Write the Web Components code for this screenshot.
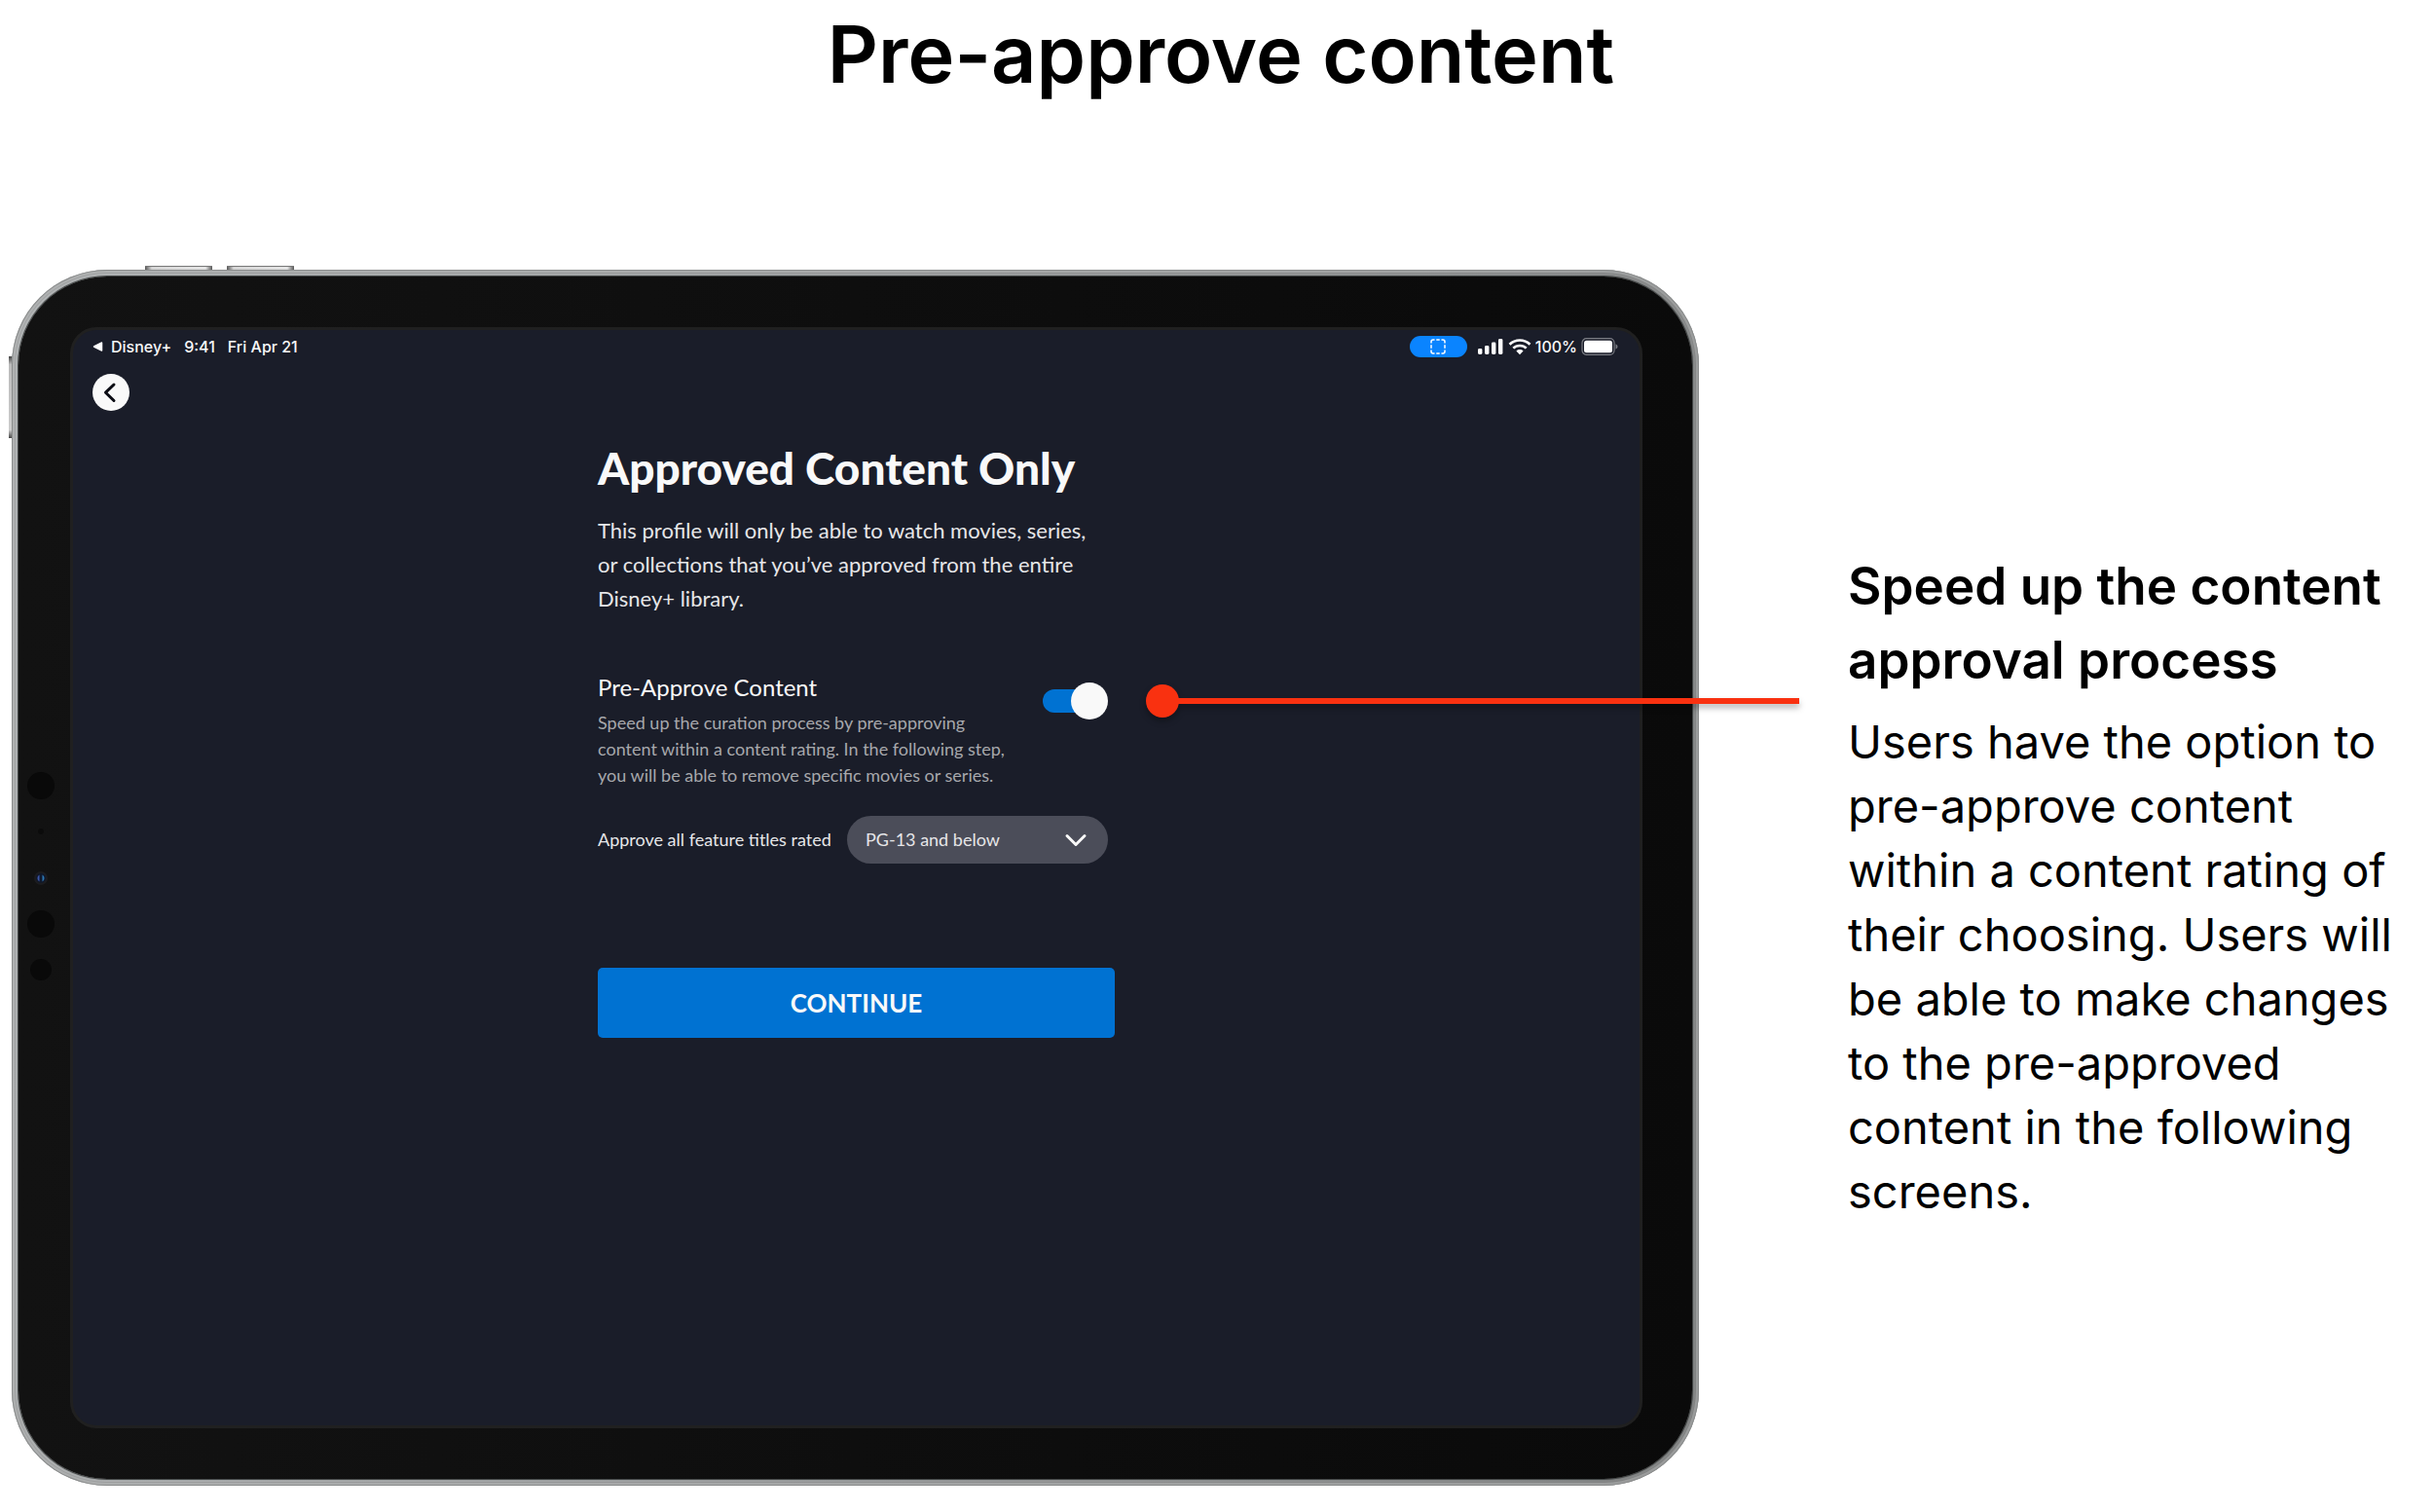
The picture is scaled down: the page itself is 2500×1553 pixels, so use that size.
<!DOCTYPE html>
<html lang="en">
<head>
  <meta charset="utf-8">
  <meta name="viewport" content="width=device-width, initial-scale=1">
  <title>Pre-approve content</title>
  <style>
    *, *::after, *::before {
      box-sizing: border-box;
    }

    body {
      color: #000;
      font-family: Inter, sans-serif;
      margin: 0;
      background: #fff;
    }
  </style>
</head>
<body>
  <feature-slide>
    <span slot="title">Pre-approve content</span>
    <tablet-frame slot="device">
      <status-bar app="Disney+" time="9:41" date="Fri Apr 21" battery="100%"></status-bar>
      <back-button></back-button>
      <approval-form>
        <callout-line slot="callout"></callout-line>
      </approval-form>
    </tablet-frame>
    <side-note slot="note">
      <span slot="heading">Speed up the content approval process</span>
      Users have the option to pre-approve content within a content rating of their choosing. Users will be able to make changes to the pre-approved content in the following screens.
    </side-note>
  </feature-slide>

  <script>
    class FeatureSlide extends HTMLElement {
      constructor() {
        super();

        this.attachShadow({ mode: 'open' });
        this.shadowRoot.innerHTML = `
          <style>
            :host {
              padding: 0 12px;
              display: block;
            }

            h1 {
              font-size: 81px;
              font-weight: 600;
              line-height: 96px;
              text-align: center;
              padding: 8px 0 173px 8px;
              margin: 0;
            }

            main {
              display: grid;
              grid-template-columns: 1733fr 590fr;
              column-gap: 153px;
              align-items: center;
            }
          </style>

          <h1><slot name="title"></slot></h1>
          <main>
            <slot name="device"></slot>
            <slot name="note"></slot>
          </main>
        `;
      }
    }

    class TabletFrame extends HTMLElement {
      constructor() {
        super();

        this.attachShadow({ mode: 'open' });
        this.shadowRoot.innerHTML = `
          <style>
            *, *::after, *::before {
              box-sizing: border-box;
            }

            :host {
              aspect-ratio: 1733 / 1249;
              display: block;
              position: relative;
            }

            .shell {
              height: 100%;
              padding: 7px;
              border-radius: 98px;
              background: linear-gradient(100deg, #b9bcbd, #a2a4a5 50%, #858787);
              box-shadow: inset 0 0 0 1px #8b8d8d, inset 0 0 0 3px #d0d2d355, inset 0 0 1px 4px #77797966;
              position: relative;
            }

            .bezel {
              height: 100%;
              padding: 55px 54px 55px 56px;
              border-radius: 91px;
              background: linear-gradient(90deg, #121212, #0a0a0a);
              box-shadow: 0 0 1px 1px #3a3d3d;
              position: relative;
            }

            .screen {
              height: 100%;
              border-radius: 24px;
              color: #f9f9f9;
              background: #1a1d29;
              box-shadow: 0 0 0 3px #202020;
            }

            .key {
              background: linear-gradient(90deg, #555, #d5d5d5 10%, #e4e4e4 90%, #555);
              border-top: solid 1px #777;
              width: 69px;
              height: 6px;
              position: absolute;
              top: -4px;
              left: 137px;
            }
            .key--second {
              left: 221px;
            }
            .key--side {
              background: linear-gradient(#444, #bbb 10%, #ccc 90%, #444);
              border: none;
              width: 4px;
              height: 84px;
              top: 89px;
              left: -3px;
            }

            .sensors {
              position: absolute;
              top: calc(50% - 113px);
              left: 6px;
            }
          </style>

          <div class="key"></div>
          <div class="key key--second"></div>
          <div class="key key--side"></div>
          <div class="shell">
            <div class="bezel">
              <svg class="sensors" width="34" height="226" viewBox="0 0 34 226" aria-hidden="true">
                <circle cx="17" cy="18" r="14" fill="#090909"/>
                <circle cx="17" cy="65" r="3" fill="#0b0b0b"/>
                <circle cx="17" cy="113" r="7" fill="#1c1c1f"/>
                <circle cx="17" cy="113" r="5" fill="#10182a"/>
                <path d="M15.5 109.5a4 4 0 0 0 0 7z" fill="#3d57a8"/>
                <path d="M18.5 109.5a4 4 0 0 1 0 7z" fill="#2c78b4"/>
                <circle cx="17" cy="160" r="14" fill="#090909"/>
                <circle cx="17" cy="207" r="11" fill="#090909"/>
              </svg>
              <div class="screen"><slot></slot></div>
            </div>
          </div>
        `;
      }
    }

    class StatusBar extends HTMLElement {
      constructor() {
        super();

        this.attachShadow({ mode: 'open' });
        this.shadowRoot.innerHTML = `
          <style>
            :host {
              font: 500 16px/20px Inter, sans-serif;
              height: 34px;
              padding: 0 22px 0 20px;
              display: flex;
              align-items: center;
              justify-content: space-between;
            }

            div {
              display: flex;
              align-items: center;
            }

            .app {
              color: inherit;
              text-decoration: none;
              display: flex;
              align-items: center;
              gap: 8px;
            }

            .left {
              gap: 13px;
            }

            .right {
              gap: 4px;
            }

            .capture {
              border-radius: 11px;
              margin-right: 6px;
              background: #0a84ff;
              width: 59px;
              height: 22px;
              justify-content: center;
            }
          </style>

          <div class="left">
            <a class="app" href="#">
              <svg width="11" height="10" viewBox="0 0 11 10" aria-hidden="true">
                <path d="M9.5 1v8L1.5 5z" fill="#fff" stroke="#fff" stroke-width="1.5" stroke-linejoin="round"/>
              </svg>
              <span>${this.getAttribute('app')}</span>
            </a>
            <span>${this.getAttribute('time')}</span>
            <span>${this.getAttribute('date')}</span>
          </div>
          <div class="right">
            <div class="capture">
              <svg width="16" height="16" viewBox="0 0 16 16" fill="none" stroke="#fff" stroke-width="1.5" stroke-linecap="round" aria-hidden="true">
                <path d="M1 4V3a2 2 0 0 1 2-2h1M12 1h1a2 2 0 0 1 2 2v1M15 12v1a2 2 0 0 1-2 2h-1M4 15H3a2 2 0 0 1-2-2v-1M6.8 1h2.4M6.8 15h2.4M1 6.8v2.4M15 6.8v2.4"/>
              </svg>
            </div>
            <svg width="28" height="18" viewBox="0 0 28 18" fill="#fff" aria-hidden="true">
              <rect x="1" y="11" width="4.4" height="6" rx="1.4"/>
              <rect x="8" y="8" width="4.4" height="9" rx="1.4"/>
              <rect x="15" y="4.5" width="4.4" height="12.5" rx="1.4"/>
              <rect x="22" y="1" width="4.4" height="16" rx="1.4"/>
            </svg>
            <svg width="24" height="18" viewBox="0 0 24 18" fill="none" stroke="#fff" stroke-width="2.6" aria-hidden="true">
              <path d="M1.5 6.8a15 15 0 0 1 21 0M5.3 10.7a9.5 9.5 0 0 1 13.4 0"/>
              <path d="M12 17.2l-3.600-3.700a5.200 5.200 0 0 1 7.200 0z" fill="#fff" stroke="none"/>
            </svg>
            <span>${this.getAttribute('battery')}</span>
            <svg width="38" height="18" viewBox="0 0 38 18" aria-hidden="true">
              <rect x="1" y=".7" width="33" height="16.6" rx="4.5" fill="none" stroke="#7b7d84" stroke-width="1.2"/>
              <rect x="3" y="2.8" width="29" height="12.4" rx="2.5" fill="#fff"/>
              <path d="M35.5 6.300q2 1 2 2.700t-2 2.700z" fill="#7b7d84"/>
            </svg>
          </div>
        `;
      }
    }

    class BackButton extends HTMLElement {
      constructor() {
        super();

        this.attachShadow({ mode: 'open' });
        this.shadowRoot.innerHTML = `
          <style>
            :host {
              margin: 11px 20px 0;
              display: flex;
            }

            button {
              cursor: pointer;
              padding: 0;
              border: none;
              border-radius: 50%;
              background: #f9f9f9;
              width: 38px;
              height: 38px;
              display: grid;
              place-items: center;
            }
          </style>

          <button type="button" aria-label="Back">
            <svg width="38" height="38" viewBox="0 0 38 38" fill="none" stroke="#0b0c14" stroke-width="3" stroke-linecap="round" stroke-linejoin="round">
              <path d="M22 11l-8.500 8.200 8.500 8.300"/>
            </svg>
          </button>
        `;
      }
    }

    class ApprovalForm extends HTMLElement {
      constructor() {
        super();

        this.attachShadow({ mode: 'open' });
        this.shadowRoot.innerHTML = `
          <style>
            *, *::after, *::before {
              box-sizing: border-box;
            }

            :host {
              font: 18px/27px Lato, sans-serif;
              width: 531px;
              margin: 31px auto 0;
              display: block;
            }

            h2 {
              font-size: 46px;
              font-weight: 900;
              line-height: 56px;
              margin: 0 0 18px;
            }

            p {
              margin: 0;
            }

            .intro {
              color: #e6e6e8;
              font-size: 22px;
              line-height: 35px;
              width: 524px;
              margin-bottom: 59px;
            }

            .row {
              width: 524px;
              display: flex;
              justify-content: space-between;
              position: relative;
            }
            .row--rating {
              margin: 28px 0 107px;
              align-items: center;
            }

            .option {
              width: 434px;
            }
            .option label {
              font-size: 24px;
              line-height: 30px;
              margin-bottom: 8px;
              display: block;
            }
            .option p {
              color: #a7a8ac;
            }

            .switch {
              appearance: none;
              cursor: pointer;
              width: 67px;
              height: 38px;
              margin: 10px 0 0;
              display: grid;
              align-items: center;
            }
            .switch::before,
            .switch::after {
              content: '';
              grid-area: 1 / 1;
            }
            .switch::before {
              border-radius: 12px;
              background: #4b4d59;
              width: 60px;
              height: 24px;
            }
            .switch::after {
              border-radius: 50%;
              background: #f9f9f9;
              width: 38px;
              height: 38px;
            }
            .switch:checked::before {
              background: #0072d2;
            }
            .switch:checked::after {
              justify-self: end;
            }

            .rating-label {
              color: #e6e6e8;
            }

            .picker {
              display: grid;
              align-items: center;
            }
            .picker > * {
              grid-area: 1 / 1;
            }
            .picker select {
              appearance: none;
              color: #e6e6e8;
              font: inherit;
              width: 268px;
              height: 49px;
              padding: 0 60px 0 19px;
              border: none;
              border-radius: 25px;
              background: #4b4d59;
            }
            .picker svg {
              pointer-events: none;
              justify-self: end;
              margin-right: 21px;
            }

            .submit {
              cursor: pointer;
              color: #f9f9f9;
              font: 700 26px/30px Lato, sans-serif;
              width: 100%;
              height: 72px;
              border: none;
              border-radius: 5px;
              background: #0072d2;
              display: block;
            }
          </style>

          <h2>Approved Content Only</h2>
          <p class="intro">This profile will only be able to watch movies, series, or collections that you’ve approved from the entire Disney+ library.</p>
          <div class="row">
            <div class="option">
              <label for="preApprove">Pre-Approve Content</label>
              <p>Speed up the curation process by pre-approving content within a content rating. In the following step, you will be able to remove specific movies or series.</p>
            </div>
            <input class="switch" id="preApprove" type="checkbox" role="switch" checked>
            <slot name="callout"></slot>
          </div>
          <div class="row row--rating">
            <label class="rating-label" for="rating">Approve all feature titles rated</label>
            <div class="picker">
              <select id="rating">
                <option>PG-13 and below</option>
              </select>
              <svg width="24" height="16" viewBox="0 0 24 16" fill="none" stroke="#f9f9f9" stroke-width="3" stroke-linecap="round" stroke-linejoin="round" aria-hidden="true">
                <path d="M3 3.500l9 9 9-9"/>
              </svg>
            </div>
          </div>
          <button type="button" class="submit">CONTINUE</button>
        `;
      }
    }

    // Dot and rule that run from the switch out over the tablet's edge
    class CalloutLine extends HTMLElement {
      constructor() {
        super();

        this.attachShadow({ mode: 'open' });
        this.shadowRoot.innerHTML = `
          <style>
            :host {
              filter: drop-shadow(0 4px 3px rgba(0, 0, 0, 0.3));
              width: 671px;
              height: 34px;
              display: flex;
              align-items: center;
              position: absolute;
              top: 12px;
              left: calc(100% + 39px);
              z-index: 1;
            }

            .dot {
              border-radius: 50%;
              background: #f93110;
              width: 34px;
              height: 34px;
            }

            .rule {
              background: #f93110;
              height: 6px;
              margin-left: -2px;
              flex: 1;
            }
          </style>

          <div class="dot"></div>
          <div class="rule"></div>
        `;
      }
    }

    class SideNote extends HTMLElement {
      constructor() {
        super();

        this.attachShadow({ mode: 'open' });
        this.shadowRoot.innerHTML = `
          <style>
            :host {
              padding-top: 18px;
              display: block;
            }

            h2 {
              font-size: 53px;
              font-weight: 600;
              line-height: 76px;
              margin: 0 0 13px;
            }

            p {
              font-size: 47px;
              line-height: 66px;
              margin: 0;
            }
          </style>

          <h2><slot name="heading"></slot></h2>
          <p><slot></slot></p>
        `;
      }
    }

    window.customElements.define('feature-slide', FeatureSlide);
    window.customElements.define('tablet-frame', TabletFrame);
    window.customElements.define('status-bar', StatusBar);
    window.customElements.define('back-button', BackButton);
    window.customElements.define('approval-form', ApprovalForm);
    window.customElements.define('callout-line', CalloutLine);
    window.customElements.define('side-note', SideNote);
  </script>
</body>
</html>
